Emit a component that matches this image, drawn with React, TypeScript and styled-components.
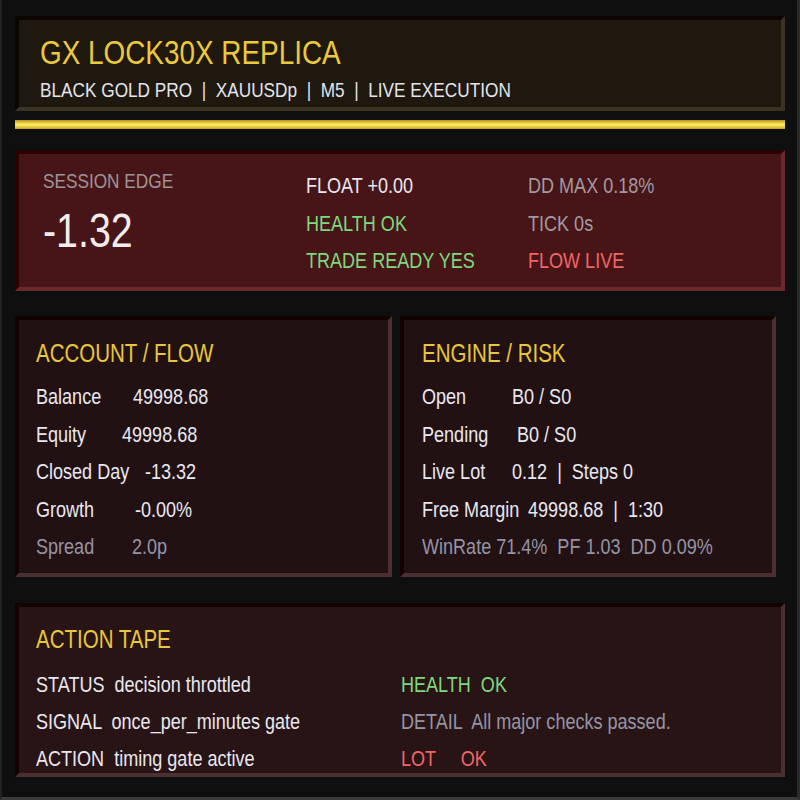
import React from "react";
import styled, { createGlobalStyle, css } from "styled-components";

const Global = createGlobalStyle`
  html, body { margin: 0; padding: 0; background: #0f0f0f; }
  * { box-sizing: border-box; }
`;

const FONT = `"Liberation Sans", Arial, sans-serif`;
const SX = 0.82;

/* The panel text is a narrow face: Arial squeezed horizontally. */
const narrow = css`
  transform: scaleX(${SX});
  transform-origin: 0 50%;
  white-space: pre;
`;

const Frame = styled.div`
  width: 800px;
  height: 800px;
  background: #0f0f0f;
  border-left: 2px solid #222222;
  border-right: 3px solid #2c2c2c;
  border-bottom: 3px solid #3a3a3a;
  padding: 16px 12px 0 13px;
  display: flex;
  flex-direction: column;
  font-family: ${FONT};
  color: #e6e6ee;
  overflow: hidden;
`;

type Tone = "header" | "session" | "card" | "tape";

const tones: Record<Tone, { bg: string; dark: string; light: string }> = {
  header: { bg: "#1f180e", dark: "#0b0500", light: "#3c3322" },
  session: { bg: "#471517", dark: "#2c0000", light: "#6a2a2c" },
  card: { bg: "#221113", dark: "#120202", light: "#4b2f31" },
  tape: { bg: "#281415", dark: "#120202", light: "#4b2f31" },
};

const Panel = styled.section<{ $tone: Tone; $h: number; $pt: number; $pl: number }>`
  height: ${(p) => p.$h}px;
  background: ${(p) => tones[p.$tone].bg};
  border-style: solid;
  border-width: 4px;
  border-color: ${(p) =>
    `${tones[p.$tone].dark} ${tones[p.$tone].light} ${tones[p.$tone].light} ${tones[p.$tone].dark}`};
  padding: ${(p) => p.$pt}px 0 0 ${(p) => p.$pl}px;
  display: flex;
  flex-direction: column;
  overflow: hidden;
`;

const Title = styled.h1`
  margin: 0;
  font-size: 34px;
  line-height: 40px;
  font-weight: 400;
  color: #ecc93c;
  ${narrow}
`;

const Subtitle = styled.div`
  margin-top: 3px;
  font-size: 21px;
  line-height: 30px;
  color: #e4e4ec;
  ${narrow}
`;

const GoldBar = styled.div`
  margin-top: 9px;
  height: 9px;
  background: linear-gradient(
    to bottom,
    #b48c26 0%,
    #e2c23a 25%,
    #f8ec5c 50%,
    #eed444 72%,
    #c49a2a 100%
  );
`;

const SessionGrid = styled.div`
  display: grid;
  grid-template-columns: 263px 222px 1fr;
`;

const Edge = styled.div`
  display: flex;
  flex-direction: column;
`;

const EdgeLabel = styled.div`
  font-size: 21px;
  line-height: 28px;
  color: #9e9496;
  ${narrow}
`;

const EdgeValue = styled.div`
  margin-top: 8px;
  font-size: 48px;
  line-height: 56px;
  color: #f4ecec;
  ${narrow}
`;

type Hue = "white" | "green" | "grey" | "red" | "dim" | "gold";

const hues: Record<Hue, string> = {
  white: "#e8e8f0",
  green: "#7ed97e",
  grey: "#a29aa0",
  red: "#f26565",
  dim: "#9494a6",
  gold: "#e9c73b",
};

const StatCol = styled.div`
  display: flex;
  flex-direction: column;
`;

const Line = styled.div<{ $hue: Hue; $lh?: number }>`
  font-size: 22px;
  line-height: ${(p) => p.$lh ?? 37.5}px;
  color: ${(p) => hues[p.$hue]};
  ${narrow}
`;

const Cards = styled.div`
  margin-top: 25px;
  display: grid;
  grid-template-columns: 377px 376px;
  column-gap: 8px;
`;

const CardTitle = styled.h2<{ $mb?: number }>`
  margin: 0 0 ${(p) => p.$mb ?? 5}px;
  font-size: 25px;
  line-height: 40px;
  font-weight: 400;
  color: #e9c73b;
  ${narrow}
`;

const Row = styled.div<{ $hue: Hue }>`
  display: flex;
  font-size: 22px;
  line-height: 37.5px;
  color: ${(p) => hues[p.$hue]};
  ${narrow}
`;

/* $w is the on-screen column width; the row is squeezed, so widen it back. */
const Label = styled.span<{ $w: number }>`
  flex: none;
  width: ${(p) => p.$w / SX}px;
`;

const TapeGrid = styled.div`
  display: grid;
  grid-template-columns: 365px 1fr;
  margin-top: 7px;
`;

const Spacer = styled.div<{ $h: number }>`
  height: ${(p) => p.$h}px;
  flex: none;
`;

const account = [
  { l: "Balance", v: "49998.68", w: 97, hue: "white" as Hue },
  { l: "Equity", v: "49998.68", w: 86, hue: "white" as Hue },
  { l: "Closed Day", v: "-13.32", w: 109, hue: "white" as Hue },
  { l: "Growth", v: "-0.00%", w: 99, hue: "white" as Hue },
  { l: "Spread", v: "2.0p", w: 96, hue: "dim" as Hue },
];

const engine = [
  { l: "Open", v: "B0 / S0", w: 90, hue: "white" as Hue },
  { l: "Pending", v: "B0 / S0", w: 95, hue: "white" as Hue },
  { l: "Live Lot", v: "0.12  |  Steps 0", w: 90, hue: "white" as Hue },
  { l: "Free Margin", v: "49998.68  |  1:30", w: 106, hue: "white" as Hue },
];

export default function App() {
  return (
    <>
      <Global />
      <Frame>
        <Panel $tone="header" $h={95} $pt={12} $pl={21}>
          <Title>GX LOCK30X REPLICA</Title>
          <Subtitle>BLACK GOLD PRO  |  XAUUSDp  |  M5  |  LIVE EXECUTION</Subtitle>
        </Panel>
        <GoldBar />
        <Spacer $h={21} />
        <Panel $tone="session" $h={141} $pt={13} $pl={24}>
          <SessionGrid>
            <Edge>
              <EdgeLabel>SESSION EDGE</EdgeLabel>
              <EdgeValue>-1.32</EdgeValue>
            </Edge>
            <StatCol>
              <Line $hue="white">FLOAT +0.00</Line>
              <Line $hue="green">HEALTH OK</Line>
              <Line $hue="green">TRADE READY YES</Line>
            </StatCol>
            <StatCol>
              <Line $hue="grey">DD MAX 0.18%</Line>
              <Line $hue="grey">TICK 0s</Line>
              <Line $hue="red">FLOW LIVE</Line>
            </StatCol>
          </SessionGrid>
        </Panel>
        <Cards>
          <Panel $tone="card" $h={261} $pt={13} $pl={17}>
            <CardTitle>ACCOUNT / FLOW</CardTitle>
            {account.map((r) => (
              <Row key={r.l} $hue={r.hue}>
                <Label $w={r.w}>{r.l}</Label>
                <span>{r.v}</span>
              </Row>
            ))}
          </Panel>
          <Panel $tone="card" $h={261} $pt={13} $pl={18}>
            <CardTitle>ENGINE / RISK</CardTitle>
            {engine.map((r) => (
              <Row key={r.l} $hue={r.hue}>
                <Label $w={r.w}>{r.l}</Label>
                <span>{r.v}</span>
              </Row>
            ))}
            <Row $hue="dim">WinRate 71.4%  PF 1.03  DD 0.09%</Row>
          </Panel>
        </Cards>
        <Spacer $h={26} />
        <Panel $tone="tape" $h={174} $pt={12} $pl={17}>
          <CardTitle $mb={0}>ACTION TAPE</CardTitle>
          <TapeGrid>
            <StatCol>
              <Line $hue="white" $lh={37}>STATUS  decision throttled</Line>
              <Line $hue="white" $lh={37}>SIGNAL  once_per_minutes gate</Line>
              <Line $hue="white" $lh={37}>ACTION  timing gate active</Line>
            </StatCol>
            <StatCol>
              <Line $hue="green" $lh={37}>HEALTH  OK</Line>
              <Line $hue="dim" $lh={37}>DETAIL  All major checks passed.</Line>
              <Line $hue="red" $lh={37}>LOT     OK</Line>
            </StatCol>
          </TapeGrid>
        </Panel>
      </Frame>
    </>
  );
}
